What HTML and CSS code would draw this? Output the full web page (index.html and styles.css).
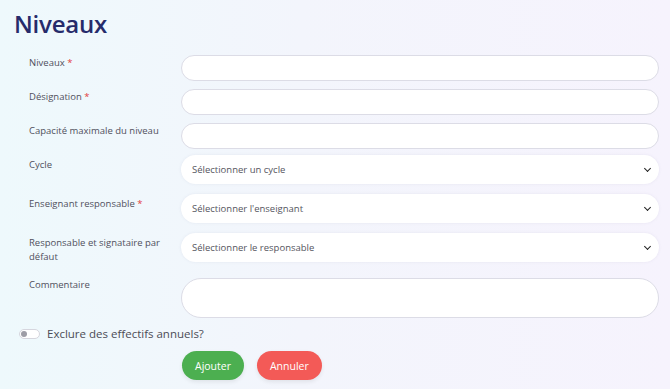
FILE: index.html
```html
<!DOCTYPE html>
<html lang="fr">
<head>
  <meta charset="UTF-8" />
  <meta name="viewport" content="width=device-width, initial-scale=1" />
  <title>Niveaux</title>
  <link rel="stylesheet" href="styles.css">
</head>
<body>
  <h1 class="page-title">Niveaux</h1>

  <form class="level-form">
    <div class="row">
      <label for="niveau">Niveaux <span class="req">*</span></label>
      <input id="niveau" type="text">
    </div>
    <div class="row">
      <label for="designation">Désignation <span class="req">*</span></label>
      <input id="designation" type="text">
    </div>
    <div class="row">
      <label for="capacite">Capacité maximale du niveau</label>
      <input id="capacite" type="text">
    </div>
    <div class="row row-select first-select">
      <label for="cycle">Cycle</label>
      <div class="select">Sélectionner un cycle<span class="chev"></span></div>
    </div>
    <div class="row row-select">
      <label for="enseignant">Enseignant responsable <span class="req">*</span></label>
      <div class="select">Sélectionner l'enseignant<span class="chev"></span></div>
    </div>
    <div class="row row-select">
      <label for="responsable">Responsable et signataire par défaut</label>
      <div class="select">Sélectionner le responsable<span class="chev"></span></div>
    </div>
    <div class="row row-comment">
      <label for="commentaire">Commentaire</label>
      <textarea id="commentaire"></textarea>
    </div>

    <div class="toggle-line">
      <span class="toggle"><span class="knob"></span></span>
      <span>Exclure des effectifs annuels?</span>
    </div>

    <div class="actions">
      <button type="button" class="btn btn-add">Ajouter</button>
      <button type="button" class="btn btn-cancel">Annuler</button>
    </div>
  </form>
</body>
</html>
```

FILE: styles.css
```css
body {
  margin: 0;
  padding: 0 11px 0 14px;
  font-family: "Open Sans", "Noto Sans", sans-serif;
  background: linear-gradient(90deg, #eef9fc 0%, #f3f5fc 45%, #f6f3fd 100%);
  color: #50505c;
  height: 389px;
  overflow: hidden;
}

.page-title {
  margin: 0;
  padding-top: 8px;
  font-size: 24px;
  font-weight: 600;
  color: #262b6b;
  line-height: 32px;
  letter-spacing: -0.2px;
}

.level-form {
  margin-top: 15px;
}

.row {
  display: grid;
  grid-template-columns: 152px 1fr;
  align-items: start;
  margin-bottom: 8px;
  padding-left: 15px;
}

.row label {
  font-size: 9.5px;
  line-height: 14px;
  padding-top: 1px;
  padding-right: 20px;
}

.req {
  color: #e23b3b;
}

.row input,
.row textarea {
  box-sizing: border-box;
  height: 26px;
  width: 100%;
  border: 1px solid #dcdce6;
  border-radius: 13px;
  background: #fff;
  margin: 0;
  font: inherit;
}

.row-select {
  margin-bottom: 10px;
}
.first-select {
  margin-top: -2px;
}
.row-select label {
  padding-top: 3px;
}

.select {
  position: relative;
  height: 29px;
  border-radius: 15px;
  background: #fff;
  box-shadow: 0 0 3px rgba(120, 120, 160, 0.12);
  font-size: 9.5px;
  line-height: 29px;
  padding-left: 11px;
  color: #55555e;
}

.chev {
  position: absolute;
  right: 9px;
  top: 11px;
  width: 4px;
  height: 4px;
  border-right: 1.5px solid #222;
  border-bottom: 1.5px solid #222;
  transform: rotate(45deg);
}

.row-comment {
  margin-top: 14px;
}
.row-comment label {
  padding-top: 0;
}
.row textarea {
  height: 40px;
  border-radius: 20px;
  resize: none;
}

.toggle-line {
  display: flex;
  align-items: center;
  gap: 7px;
  margin-top: 8px;
  padding-left: 5px;
  font-size: 11.5px;
  color: #4c4c56;
}

.toggle {
  position: relative;
  box-sizing: border-box;
  width: 21px;
  height: 10px;
  border: 1px solid #d6d6de;
  border-radius: 6px;
  background: #fff;
}
.knob {
  position: absolute;
  left: 1px;
  top: 1px;
  width: 6px;
  height: 6px;
  border-radius: 50%;
  background: #9d9da6;
}

.actions {
  display: flex;
  gap: 13px;
  margin-top: 10px;
  padding-left: 168px;
}

.btn {
  height: 29px;
  border: none;
  border-radius: 15px;
  color: #fff;
  font-family: inherit;
  font-size: 10.5px;
  padding: 0 13px;
  box-shadow: 0 2px 4px rgba(0, 0, 0, 0.08);
}
.btn-add {
  background: #4caf50;
}
.btn-cancel {
  background: #f35a57;
}
```
